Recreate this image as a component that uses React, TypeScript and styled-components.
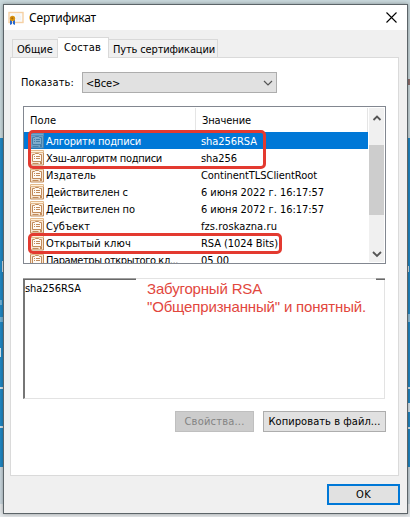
import React, { useLayoutEffect, useRef, useState } from 'react';
import styled, { createGlobalStyle } from 'styled-components';

const GlobalStyle = createGlobalStyle`
  * { box-sizing: border-box; }
  body { margin: 0; overflow: hidden; }
`;

const Desktop = styled.div`
  width: 410px;
  height: 517px;
  position: relative;
  overflow: hidden;
  padding: 4px 2px 3px 3px;
  font: 11px/17px 'DejaVu Sans Condensed', 'DejaVu Sans', sans-serif;
  color: #000;
  background: linear-gradient(#c9d8dc 0 138px, #2087c3 138px 467px, #c9d6dd 467px 504px, #e4e8ea 504px);
`;

const Streak = styled.i<{ $x: number; $y: number; $w: number; $h: number; $c?: string }>`
  position: absolute;
  left: ${(p) => p.$x}px;
  top: ${(p) => p.$y}px;
  width: ${(p) => p.$w}px;
  height: ${(p) => p.$h}px;
  background: ${(p) => p.$c || '#d5e4ed'};
`;

const Dialog = styled.div`
  position: relative;
  width: 405px;
  height: 510px;
  display: flex;
  flex-direction: column;
  background: #f0f0f0;
  border: 1px solid #5c6468;
  box-shadow: 0 0 4px rgba(0, 0, 0, 0.35);
`;

const TitleBar = styled.header`
  height: 25px;
  display: flex;
  align-items: center;
  padding: 0 10px 0 4px;
  background: #fff;
  font-family: 'Noto Sans', 'Open Sans', sans-serif;
  font-size: 12px;
`;

const Title = styled.div`
  flex: 1;
  padding-left: 5px;
`;

const Tabs = styled.div`
  height: 28px;
  display: flex;
  align-items: flex-end;
  padding: 0 0 1px 8px;
  margin-bottom: -1px;
  z-index: 1;
`;

const Tab = styled.div<{ $w: number; $active?: boolean }>`
  width: ${(p) => p.$w}px;
  height: ${(p) => (p.$active ? 21 : 18)}px;
  margin-bottom: ${(p) => (p.$active ? -1 : 0)}px;
  padding: ${(p) => (p.$active ? '1px 0 0 6px' : '1px 0 0 4px')};
  border: 1px solid #d9d9d9;
  border-bottom: 0;
  background: ${(p) => (p.$active ? '#fff' : '#f0f0f0')};
  & + & { border-left-width: ${(p) => (p.$active ? 1 : 0)}px; }
`;

const Panel = styled.main`
  width: 389px;
  height: 419px;
  margin-left: 6px;
  padding: 14px 12px;
  border: 1px solid #dadada;
  background: #fff;
`;

const FilterRow = styled.div`
  display: flex;
  align-items: center;
  height: 21px;
  margin-left: -2px;
`;

const FilterLabel = styled.label`
  width: 61px;
`;

const Select = styled.div`
  width: 195px;
  height: 21px;
  display: flex;
  align-items: center;
  justify-content: space-between;
  padding: 1px 3px 0 3px;
  border: 1px solid #adadad;
  background: #e1e1e1;
`;

const List = styled.div`
  position: relative;
  width: 363px;
  height: 158px;
  margin-top: 13px;
  display: flex;
  border: 1px solid #828790;
`;

const Columns = styled.div`
  flex: 1;
  overflow: hidden;
  padding-top: 1px;
`;

const HeadRow = styled.div`
  display: flex;
  height: 24px;
  line-height: 25px;
`;

const HeadCell = styled.div<{ $w: number }>`
  width: ${(p) => p.$w}px;
  padding-left: 6px;
  border-right: 1px solid #e5e5e5;
`;

const Row = styled.div<{ $selected?: boolean }>`
  display: flex;
  height: 17px;
  line-height: 19px;
  padding-left: 6px;
  color: ${(p) => (p.$selected ? '#fff' : '#000')};
  background: ${(p) => (p.$selected ? '#0078d7' : '#fff')};
`;

const FieldCell = styled.div`
  width: 157px;
  padding-left: 2px;
`;

const ScrollBar = styled.div`
  width: 17px;
  display: flex;
  flex-direction: column;
  justify-content: space-between;
  align-items: center;
  padding: 6px 0 4px;
  border: 1px solid #fff;
  background: linear-gradient(#f0f0f0 0 37px, #cdcdcd 37px 107px, #f0f0f0 107px);
`;

const Marker = styled.div<{ $x: number; $y: number; $w: number; $h: number }>`
  position: absolute;
  left: ${(p) => p.$x}px;
  top: ${(p) => p.$y}px;
  width: ${(p) => p.$w}px;
  height: ${(p) => p.$h}px;
  border: 3px solid #e33a30;
  border-radius: 5px;
`;

const Details = styled.div`
  position: relative;
  width: 362px;
  height: 121px;
  margin-top: 14px;
  padding: 1px 0 0 0;
  border: 1px solid #e3e3e3;
  border-left: 2px solid #767676;
`;

const Edge = styled.i<{ $x: number; $w: number }>`
  position: absolute;
  top: -1px;
  left: ${(p) => p.$x}px;
  width: ${(p) => p.$w}px;
  height: 2px;
  background: linear-gradient(#a0a0a0 50%, #696969 50%);
`;

const Note = styled.div`
  position: absolute;
  left: 122px;
  top: 1px;
  font: 15px/18px 'Liberation Sans', Arial, sans-serif;
  color: #e2473e;
`;

const Actions = styled.div`
  display: flex;
  justify-content: flex-end;
  gap: 9px;
  margin-top: 12px;
`;

const Button = styled.button<{ $w: number; $primary?: boolean }>`
  width: ${(p) => p.$w}px;
  height: 21px;
  padding: 0;
  display: flex;
  align-items: center;
  justify-content: center;
  font: inherit;
  color: #000;
  background: #e1e1e1;
  border: ${(p) => (p.$primary ? '2px solid #0078d7' : '1px solid #adadad')};
  &:disabled { color: #838383; background: #ccc; border-color: #bfbfbf; }
`;

const Footer = styled.footer`
  display: flex;
  justify-content: flex-end;
  padding: 8px 7px 0 0;
`;

const Line = styled.span`
  display: inline-block;
  white-space: pre;
`;

/** Text tracked so that it occupies the given advance width. */
function Fit({ w, children }: { w: number; children: string }) {
  const ref = useRef<HTMLSpanElement>(null);
  const [spacing, setSpacing] = useState(0);
  useLayoutEffect(() => {
    if (ref.current) {
      setSpacing((w - ref.current.getBoundingClientRect().width) / children.length);
    }
  }, [w, children]);
  return <Line ref={ref} style={{ letterSpacing: spacing }}>{children}</Line>;
}

const CertificateIcon = () => (
  <svg width="16" height="14" viewBox="0 0 16 14">
    <rect x="1" y="1.5" width="14" height="10" fill="#fafafa" stroke="#f5d0a4" strokeWidth="1.4" />
    <path d="M7 4h5M8 6h5M8 8h5" stroke="#e6ebf2" />
    <path d="M2 9h2v4l-2 1zM5 9h2v5l-2-1z" fill="#2668cf" />
    <circle cx="4.5" cy="7.5" r="2.7" fill="#d99413" />
    <circle cx="4.3" cy="7.3" r="1.1" fill="#a96b0b" />
  </svg>
);

const FieldIcon = ({ selected }: { selected?: boolean }) => {
  const c = selected ? '#477fa8' : '#c18b5b';
  return (
    <svg width="14" height="17" viewBox="0 0 14 17">
      <path d="M.5 3.5V16h13V3.5z" fill={selected ? '#6fa1c6' : '#f8e7d4'} stroke={c} />
      <path d="M.5 1.5h13v2H.5z" fill={selected ? '#76a8cb' : '#fff1dc'} stroke={selected ? '#5990bd' : '#e3b98b'} />
      <path d="M2.5 5.5h2l1-1h3l1 1h2v7h-9z" fill={selected ? '#80adcd' : '#fffaf4'} stroke={c} />
      <path d="M4 7.5h1M6 7.5h4M4 9.5h1M6 9.5h4M2.5 14.5h6" stroke={c} />
      <path d="M10 13h2v2h-2z" fill={c} />
    </svg>
  );
};

const Chevron = ({ up, thin }: { up?: boolean; thin?: boolean }) => (
  <svg width="10" height="8" viewBox="0 0 10 8">
    <path d={up ? 'M1.5 6 5 2.5 8.5 6' : 'M1 2 5 6 9 2'} fill="none" stroke="#555" strokeWidth={thin ? 1.2 : 1.8} />
  </svg>
);

const rows: [string, number, string, number][] = [
  ['Алгоритм подписи', 95, 'sha256RSA', 56],
  ['Хэш-алгоритм подписи', 116, 'sha256', 36],
  ['Издатель', 50, 'ContinentTLSClientRoot', 116],
  ['Действителен с', 82, '6 июня 2022 г. 16:17:57', 123],
  ['Действителен по', 89, '6 июня 2072 г. 16:17:57', 123],
  ['Субъект', 44, 'fzs.roskazna.ru', 76],
  ['Открытый ключ', 85, 'RSA (1024 Bits)', 77],
  ['Параметры открытого кл...', 132, '05 00', 28],
];

export default function App() {
  return (
    <Desktop>
      <GlobalStyle />
      <Streak $x={2} $y={261} $w={1} $h={11} />
      <Streak $x={0} $y={300} $w={2} $h={5} $c="#6fb0d6" />
      <Streak $x={0} $y={317} $w={3} $h={5} $c="#6fb0d6" />
      <Streak $x={0} $y={348} $w={1} $h={9} />
      <Streak $x={0} $y={387} $w={4} $h={2} />
      <Streak $x={0} $y={426} $w={4} $h={2} />
      <Streak $x={408} $y={79} $w={2} $h={6} $c="#8d6f6d" />
      <Streak $x={408} $y={266} $w={1} $h={6} />
      <Streak $x={408} $y={314} $w={2} $h={8} $c="#8fc0dd" />
      <Streak $x={408} $y={387} $w={2} $h={2} />
      <Streak $x={408} $y={403} $w={2} $h={9} />
      <Streak $x={408} $y={427} $w={2} $h={2} />
      <Dialog>
        <TitleBar>
          <CertificateIcon />
          <Title><Fit w={67}>Сертификат</Fit></Title>
          <svg width="11" height="11" viewBox="0 0 11 11"><path d="m.5.5 10 10m0-10-10 10" stroke="#000" strokeWidth="1.1" /></svg>
        </TitleBar>
        <Tabs>
          <Tab $w={46}><Fit w={36}>Общие</Fit></Tab>
          <Tab $w={51} $active><Fit w={37}>Состав</Fit></Tab>
          <Tab $w={109}><Fit w={102}>Путь сертификации</Fit></Tab>
        </Tabs>
        <Panel>
          <FilterRow>
            <FilterLabel><Fit w={53}>Показать:</Fit></FilterLabel>
            <Select><Fit w={34}>{'<Все>'}</Fit><Chevron thin /></Select>
          </FilterRow>
          <List>
            <Columns>
              <HeadRow>
                <HeadCell $w={172}><Fit w={26}>Поле</Fit></HeadCell>
                <HeadCell $w={172}><Fit w={49}>Значение</Fit></HeadCell>
              </HeadRow>
              {rows.map(([field, fw, value, vw], i) => (
                <Row key={field} $selected={i === 0}>
                  <FieldIcon selected={i === 0} />
                  <FieldCell><Fit w={fw}>{field}</Fit></FieldCell>
                  <Fit w={vw}>{value}</Fit>
                </Row>
              ))}
            </Columns>
            <ScrollBar><Chevron up /><Chevron /></ScrollBar>
            <Marker $x={4} $y={23} $w={238} $h={39} />
            <Marker $x={4} $y={126} $w={254} $h={21} />
          </List>
          <Details>
            <Edge $x={-2} $w={113} />
            <Edge $x={351} $w={9} />
            <Fit w={56}>sha256RSA</Fit>
            <Note>
              <Fit w={115}>Забугорный RSA</Fit>
              <br />
              <Fit w={219}>"Общепризнанный" и понятный.</Fit>
            </Note>
          </Details>
          <Actions>
            <Button $w={79} disabled><Fit w={60}>Свойства...</Fit></Button>
            <Button $w={123}><Fit w={112}>Копировать в файл...</Fit></Button>
          </Actions>
        </Panel>
        <Footer>
          <Button $w={73} $primary><Fit w={15}>OK</Fit></Button>
        </Footer>
      </Dialog>
    </Desktop>
  );
}
